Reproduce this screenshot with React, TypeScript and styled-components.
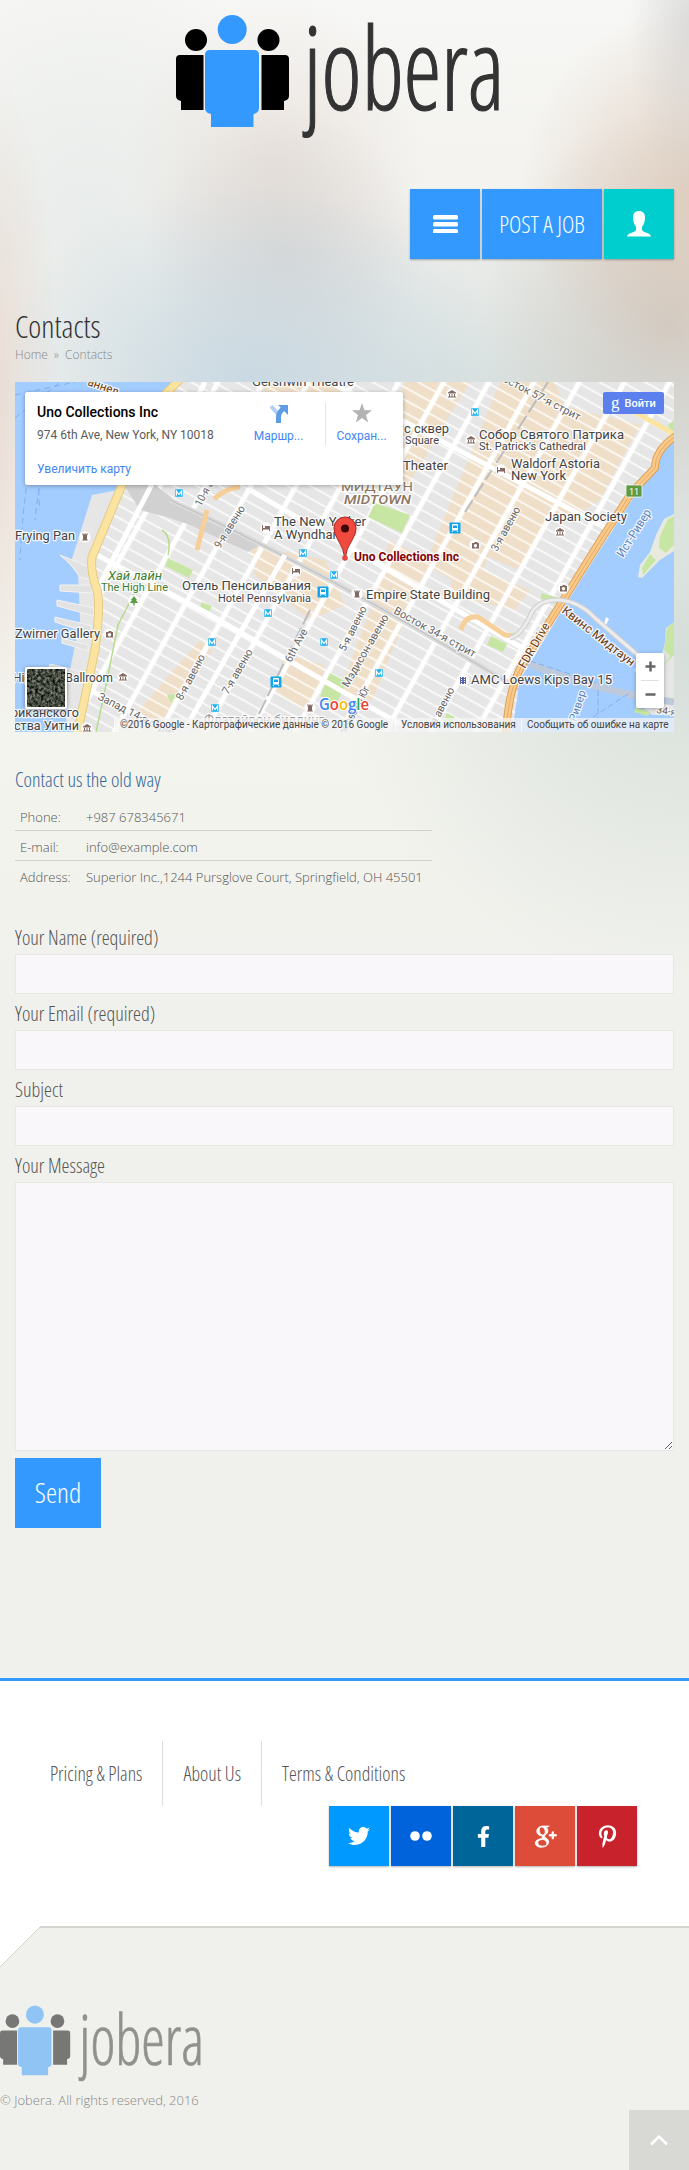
import {useState} from 'react';
import {FaFacebookF, FaPinterestP, FaTwitter} from 'react-icons/fa';
import {TiSocialGooglePlus} from 'react-icons/ti';
import styled, {createGlobalStyle} from 'styled-components';

const GlobalStyle = createGlobalStyle`
  * {
    box-sizing: border-box;
  }

  body {
    margin: 0;
    background: #f0f1ec;
    color: #555;
    font: 300 13px/20px 'Open Sans', sans-serif;
  }

  a {
    color: inherit;
    text-decoration: none;
  }
`;

const Page = styled.div`
  min-height: 2170px;
  background:
    radial-gradient(ellipse 60px 180px at 689px 20px, rgba(205, 205, 205, 0.6), transparent),
    radial-gradient(ellipse 260px 200px at 250px 385px, rgba(198, 215, 226, 0.9), transparent),
    radial-gradient(ellipse 140px 150px at 285px 255px, rgba(212, 210, 208, 0.75), transparent),
    radial-gradient(ellipse 150px 170px at 275px 165px, rgba(228, 217, 211, 0.6), transparent),
    radial-gradient(ellipse 190px 190px at 710px 190px, rgba(220, 198, 180, 0.8), transparent),
    radial-gradient(ellipse 190px 210px at 670px 320px, rgba(205, 198, 190, 0.85), transparent),
    radial-gradient(ellipse 70px 330px at -10px 400px, rgba(232, 214, 204, 0.8), transparent),
    radial-gradient(ellipse 420px 210px at 480px 400px, rgba(208, 219, 219, 0.8), transparent),
    radial-gradient(ellipse 360px 330px at 689px 650px, rgba(204, 215, 210, 0.75), transparent),
    radial-gradient(ellipse 200px 300px at 90px 230px, rgba(228, 234, 233, 0.7), transparent),
    linear-gradient(#f7f7f5, #f2f1ed 250px, #f4f4ee 740px, #f0f1ec 1000px);
`;

const Header = styled.header`
  padding: 0 15px;
`;

const HeaderLogo = styled.a`
  display: flex;
  justify-content: center;
  padding: 14px 8px 0 0;
`;

const Toolbar = styled.nav`
  display: flex;
  justify-content: flex-end;
  gap: 2px;
  padding-top: 50px;
`;

const ToolButton = styled.button<{$accent?: boolean; $wide?: boolean}>`
  display: flex;
  align-items: center;
  justify-content: center;
  width: ${props => (props.$wide ? 120 : 70)}px;
  height: 70px;
  padding: 0;
  border: 0;
  background: ${props => (props.$accent ? '#00cdcd' : '#3399ff')};
  box-shadow: 0 1px 2px rgba(0, 0, 0, 0.3);
  color: white;
  font: 300 23.500px 'Open Sans', sans-serif;
  font-stretch: 75%;
`;

const Main = styled.main`
  padding: 47px 15px 0;
`;

const Title = styled.h1`
  margin: 0;
  color: #333;
  font-size: 31px;
  font-weight: 300;
  font-stretch: 75%;
  line-height: 40px;
`;

const Breadcrumbs = styled.div`
  display: flex;
  gap: 6px;
  height: 36px;
  color: #888;
  font-size: 12px;
  line-height: 17px;
`;

const MapFrame = styled.section`
  position: relative;
  height: 350px;
  overflow: hidden;
  font-family: Roboto, sans-serif;
  font-weight: 400;
`;

const PlaceCard = styled.div`
  position: absolute;
  top: 10px;
  left: 10px;
  display: flex;
  width: 378px;
  height: 93px;
  padding: 11px 0 0 12px;
  border-radius: 2px;
  background: white;
  box-shadow: 0 1px 4px rgba(0, 0, 0, 0.3);
  color: #5b5b5b;
  font-size: 12px;
`;

const PlaceInfo = styled.div`
  width: 195px;
`;

const PlaceName = styled.div`
  color: black;
  font-size: 14px;
  font-weight: 500;
  line-height: 18px;
`;

const PlaceAddress = styled.div`
  margin-top: 6px;
  line-height: 16px;
`;

const MapLink = styled.a`
  display: block;
  margin-top: 18px;
  color: #4285f4;
  line-height: 16px;
`;

const PlaceAction = styled.a<{$divided?: boolean}>`
  display: flex;
  flex-direction: column;
  align-items: center;
  gap: 5px;
  width: ${props => (props.$divided ? 72 : 93)}px;
  height: 42px;
  border-left: ${props => (props.$divided ? '1px solid #e5e5e5' : '0')};
  color: #4285f4;
  line-height: 16px;
`;

const SignIn = styled.button`
  position: absolute;
  top: 10px;
  right: 10px;
  display: flex;
  align-items: center;
  gap: 5px;
  width: 61px;
  height: 22px;
  padding: 0 0 0 8px;
  border: 0;
  border-radius: 2px;
  background: #5b80ee;
  color: white;
  font: 500 11px Roboto, sans-serif;
`;

const SignInMark = styled.span`
  font: 400 17px/14px 'Liberation Serif', serif;
`;

const ZoomControl = styled.div`
  position: absolute;
  right: 10px;
  bottom: 24px;
  width: 28px;
  height: 55px;
  border-radius: 2px;
  background: white;
  box-shadow: 0 1px 4px rgba(0, 0, 0, 0.3);
`;

const Satellite = styled.div`
  position: absolute;
  bottom: 23px;
  left: 10px;
  width: 42px;
  height: 42px;
  border: 2px solid white;
  border-radius: 2px;
  box-shadow: 0 1px 4px rgba(0, 0, 0, 0.4);
`;

const MapFooter = styled.div`
  position: absolute;
  right: 0;
  bottom: 0;
  display: flex;
  width: 560px;
  height: 14px;
  background: rgba(245, 245, 245, 0.75);
  color: #444;
  font-size: 10px;
  line-height: 14px;
`;

const MapFooterItem = styled.span<{$width: number}>`
  width: ${props => props.$width}px;
  padding-left: 5px;
  border-left: 1px solid rgba(255, 255, 255, 0.7);
  white-space: nowrap;
`;

const SectionTitle = styled.h2`
  margin: 36px 0 0;
  color: #336699;
  font-size: 20px;
  font-weight: 300;
  font-stretch: 75%;
  line-height: 24px;
`;

const ContactList = styled.dl`
  width: 417px;
  margin: 9px 0 0;
`;

const ContactRow = styled.div`
  display: flex;
  height: 30px;
  padding: 6px 5px 0;
  border-bottom: 1px solid #d0d1cd;

  &:last-child {
    border-bottom: 0;
  }
`;

const ContactTerm = styled.dt`
  width: 66px;
`;

const ContactValue = styled.dd`
  margin: 0;
  white-space: nowrap;
`;

const Form = styled.form`
  padding-top: 27px;
`;

const Label = styled.label`
  display: block;
  height: 36px;
  padding-top: 2px;
  font-size: 20px;
  font-stretch: 75%;
  line-height: 36px;
`;

const Input = styled.input`
  display: block;
  width: 100%;
  height: 40px;
  border: 1px solid #e7e8e3;
  background: #f9f7f9;
`;

const Textarea = styled.textarea`
  display: block;
  width: 100%;
  height: 269px;
  border: 1px solid #e7e8e3;
  background: #f9f7f9;
  resize: vertical;
`;

const SendButton = styled.button`
  display: block;
  width: 86px;
  height: 70px;
  margin-top: 7px;
  padding: 0 0 2px;
  border: 0;
  background: #3399ff;
  color: white;
  font: 300 28px 'Open Sans', sans-serif;
  font-stretch: 75%;
`;

const Footer = styled.footer`
  margin-top: 150px;
`;

const FooterTop = styled.div`
  height: 248px;
  padding: 60px 52px 0 30px;
  border-top: 3px solid #3399ff;
  background: white;
`;

const FooterNav = styled.nav`
  display: flex;
  height: 65px;
`;

const FooterLink = styled.a`
  padding: 0 20px;
  font-size: 19.700px;
  font-stretch: 75%;
  line-height: 65px;

  & + & {
    border-left: 1px solid #ddd;
  }
`;

const SocialList = styled.div`
  display: flex;
  justify-content: flex-end;
  gap: 2px;
`;

const SocialLink = styled.a<{$color: string}>`
  display: flex;
  align-items: center;
  justify-content: center;
  width: 60px;
  height: 60px;
  background: ${props => props.$color};
  box-shadow: 0 1px 2px rgba(0, 0, 0, 0.3);
  color: white;
`;

const FooterBottom = styled.div`
  position: relative;
  height: 244px;
`;

const FooterEdge = styled.svg`
  display: block;
`;

const FooterLogo = styled.div`
  margin-top: 37px;
  opacity: 0.5;

  svg {
    display: block;
  }
`;

const Copyright = styled.div`
  margin-top: 7px;
  color: #888;
`;

const ToTop = styled.a`
  position: absolute;
  right: 0;
  bottom: 0;
  display: flex;
  align-items: center;
  justify-content: center;
  width: 60px;
  height: 60px;
  background: #d8d9d5;
`;

const Logo = ({width}: {width: number}) => (
  <svg width={width} height={(width * 125) / 330} viewBox="0 0 330 125">
    <g fill="black">
      <circle cx="20" cy="26" r="11" />
      <circle cx="92.500" cy="26" r="11" />
      <path d="M4 41H27.500V96H5V87Q0 86 0 82V45Q0 41 4 41Z" />
      <path d="M109 41H85.500V96H108V87Q113 86 113 82V45Q113 41 109 41Z" />
    </g>
    <g fill="#3399ff">
      <circle cx="56.200" cy="15.500" r="14.500" />
      <path d="M34 36H78Q83 36 83 41V94Q83 99 77.500 100V113H35V100Q29 99 29 94V41Q29 36 34 36Z" />
    </g>
    <text
      x="127.500"
      y="96"
      fill="#333"
      stroke="#333"
      strokeWidth="1.200"
      fontFamily="Open Sans"
      fontSize="114"
      fontWeight="300"
      textLength="201"
      lengthAdjust="spacingAndGlyphs"
      style={{fontStretch: '75%'}}
    >
      jobera
    </text>
  </svg>
);

type MapLabelData = {
  text: string;
  x: number;
  y: number;
  width: number;
  size?: number;
  angle?: number;
  color?: string;
  weight?: number;
  italic?: boolean;
};

const labels: MapLabelData[] = [
  {text: 'аннел', x: 87, y: 385, width: 32, angle: 20, color: '#6b3a10', size: 12},
  {text: 'Gershwin Theatre', x: 252, y: 386, width: 102},
  {text: '10-я авеню', x: 201, y: 507, width: 52, size: 11, angle: -62, color: '#666'},
  {text: '9-я авеню', x: 220, y: 549, width: 48, size: 11, angle: -58, color: '#666'},
  {text: 'Frying Pan', x: 15, y: 540, width: 60},
  {text: 'The New Yorker', x: 274, y: 526, width: 92},
  {text: 'A Wyndham', x: 274, y: 539, width: 70},
  {text: 'МИДТАУН', x: 341, y: 491, width: 72, color: '#8c7762', size: 12},
  {text: 'MIDTOWN', x: 344, y: 504, width: 67, color: '#8c7762', size: 12, italic: true, weight: 500},
  {text: 'с сквер', x: 404, y: 433, width: 45},
  {text: 'Square', x: 405, y: 444, width: 34, size: 11},
  {text: 'Theater', x: 403, y: 470, width: 45},
  {text: 'Собор Святого Патрика', x: 479, y: 439, width: 145},
  {text: "St. Patrick's Cathedral", x: 479, y: 450, width: 107, size: 11},
  {text: 'Waldorf Astoria', x: 511, y: 468, width: 89},
  {text: 'New York', x: 511, y: 480, width: 55},
  {text: 'Japan Society', x: 545, y: 521, width: 82},
  {text: 'осток 57-я стрит', x: 502, y: 381, width: 86, size: 11, angle: 27.5, color: '#666'},
  {text: '3-я авеню', x: 497, y: 552, width: 49, size: 11, angle: -61, color: '#666'},
  {text: 'Ист-Ривер', x: 623, y: 558, width: 54, size: 12, angle: -58, color: '#5b84bd'},
  {text: 'Uno Collections Inc', x: 354, y: 561, width: 105, size: 12, color: '#850000', weight: 700},
  {text: 'Хай лайн', x: 108, y: 580, width: 54, color: '#3d8030', italic: true},
  {text: 'The High Line', x: 101, y: 591, width: 67, size: 11, color: '#3d8030'},
  {text: 'Отель Пенсильвания', x: 182, y: 590, width: 129},
  {text: 'Hotel Pennsylvania', x: 218, y: 602, width: 93, size: 11},
  {text: 'Zwirner Gallery', x: 15, y: 638, width: 85},
  {text: 'High Line Ballroom', x: 13, y: 682, width: 100},
  {text: 'риканского', x: 11, y: 717, width: 68},
  {text: 'ства Уитни', x: 14, y: 730, width: 65},
  {text: 'Запад 14-я стрит', x: 97, y: 699, width: 86, size: 11, angle: 27, color: '#666'},
  {text: '8-я авеню', x: 182, y: 701, width: 50, size: 11, angle: -62, color: '#666'},
  {text: '7-я авеню', x: 228, y: 695, width: 50, size: 11, angle: -60, color: '#666'},
  {text: '6th Ave', x: 291, y: 663, width: 36, size: 11, angle: -62, color: '#666'},
  {text: '5-я авеню', x: 345, y: 652, width: 49, size: 11, angle: -63, color: '#666'},
  {text: 'Мэдисон-авеню', x: 348, y: 688, width: 82, size: 11, angle: -60, color: '#666'},
  {text: 'Парк-авеню Юг', x: 340, y: 745, width: 64, size: 11, angle: -62, color: '#666'},
  {text: 'я авеню', x: 436, y: 725, width: 40, size: 11, angle: -62, color: '#666'},
  {text: 'Empire State Building', x: 366, y: 599, width: 124},
  {text: 'Восток 34-я стрит', x: 393, y: 613, width: 92, size: 11, angle: 29, color: '#666'},
  {text: 'AMC Loews Kips Bay 15', x: 471, y: 684, width: 141},
  {text: 'FDR Drive', x: 525, y: 669, width: 50, size: 12, angle: -60, color: '#6b3a10'},
  {text: 'Квинс Мидтаун Т', x: 561, y: 612, width: 99, size: 12, angle: 38, color: '#6b3a10'},
  {text: 'Ривер', x: 576, y: 722, width: 32, size: 11, angle: -72, color: '#5b84bd'},
  {text: '34-я', x: 656, y: 713, width: 20, size: 10, angle: 8, color: '#666'},
  {text: 'Флэтайрон-билдинг', x: 204, y: 724, width: 120, color: '#999'},
];

const metroStops = [
  [179, 493], [303, 553], [475, 412], [334, 575], [268, 613],
  [212, 642], [324, 642], [215, 708], [379, 673],
];

const trainStations = [[455, 528], [323, 592], [276, 682]];

const hotels = [[266, 528], [501, 470], [296, 571]];
const towers = [[85, 537], [310, 708], [357, 594]];
const museums = [[452, 394], [471, 440], [560, 532], [123, 677], [87, 728]];
const sights = [[475, 545], [563, 588], [109, 634]];

const MapLabel = ({text, x, y, width, size = 13, angle = 0, color = '#444', weight = 400, italic}: MapLabelData) => (
  <text
    x={x}
    y={y}
    fill={color}
    stroke="white"
    strokeOpacity=".85"
    strokeWidth="2.500"
    strokeLinejoin="round"
    paintOrder="stroke"
    fontSize={size}
    fontWeight={weight}
    fontStyle={italic ? 'italic' : 'normal'}
    textLength={width}
    lengthAdjust="spacingAndGlyphs"
    transform={`rotate(${angle} ${x} ${y})`}
  >
    {text}
  </text>
);

const CityMap = () => (
  <svg width="659" height="350" viewBox="15 382 659 350">
    <defs>
      <pattern id="blocks" width="39.500" height="11" patternUnits="userSpaceOnUse" patternTransform="translate(190 677) rotate(29)">
        <rect width="39.500" height="11" fill="#e6e6e6" />
        <path d="M0 5.500H39.500" stroke="white" strokeWidth="1.500" />
        <path d="M0 0V11M39.500 0V11" stroke="white" strokeWidth="5" />
      </pattern>
      <pattern id="shops" width="39.500" height="11" patternUnits="userSpaceOnUse" patternTransform="translate(190 677) rotate(29)">
        <rect width="39.500" height="11" fill="#f0dfc8" />
        <path d="M0 5.500H39.500" stroke="white" strokeWidth="1.500" />
        <path d="M0 0V11M39.500 0V11" stroke="white" strokeWidth="5" />
      </pattern>
    </defs>
    <rect x="15" y="382" width="659" height="350" fill="url(#blocks)" />

    {/* commercial strips along the avenues */}
    <g fill="url(#shops)">
      <path d="M405 382L470 382L405 490L365 470Z" />
      <path d="M500 382L555 382L570 420L470 590L425 565Z" />
      <path d="M560 405L640 425L600 500L560 525L500 500Z" />
      <path d="M500 480L560 500L520 570L460 545Z" />
      <path d="M250 545L325 560L345 605L310 620L255 575Z" />
      <path d="M390 540L430 560L405 620L372 700L340 690L370 610Z" />
      <path d="M200 640L212 650L165 725L145 732L130 720Z" />
      <path d="M285 655L325 665L310 715L275 690Z" />
      <path d="M455 560L530 590L515 610L450 595Z" />
      <path d="M260 382L345 382L335 400L270 400Z" />
    </g>

    {/* Hudson */}
    <path d="M15 382H178L150 405L122 485L91 560L95 600L92 650L76 732H15Z" fill="#a3ccff" />
    <g fill="none" stroke="#83aff0" strokeDasharray="6 4">
      <path d="M15 395L75 382M15 418L60 382M50 400Q35 470 40 510M45 400Q25 460 20 560M55 420Q40 470 35 520" />
    </g>
    <path d="M92 495L118 490L95 560L98 610L92 650L88 690L76 732L66 725L68 680L80 620L78 570L70 565Z" fill="#e6e6e6" />
    <g fill="#e2e2e2" stroke="#f3f3f3">
      <path d="M60 555L92 568V580L80 577L70 564Z" />
      <path d="M57 600L94 608V616L57 606ZM55 617L92 626V634L55 622ZM50 664L90 674V682L48 671ZM60 585H92V593L60 591ZM62 638L88 645V651L62 643Z" />
    </g>

    {/* rail yards */}
    <path d="M124 485H155L175 500L205 520L260 545L248 552L190 525L170 518L140 510Z" fill="#d1d1d1" />
    <path d="M170 500Q235 530 320 575T520 690" fill="none" stroke="#dadada" strokeWidth="5" />
    <path d="M170 500Q235 530 320 575T520 690" fill="none" stroke="#bcbcbc" />
    <path d="M548 382L465 512M310 610L255 722" stroke="#bdbdbd" strokeWidth="2" strokeDasharray="16 4" />

    {/* parks */}
    <g fill="#c8e6a3">
      <path d="M375 503L410 515L402 533L368 517Z" />
      <path d="M168 558L193 570L189 578L165 566Z" />
      <path d="M201 602L212 606L208 613L200 608Z" />
      <path d="M330 673L347 682L336 704L320 696Z" />
      <path d="M491 636L507 644L503 652L487 645Z" />
      <path d="M541 593L560 598L556 604L541 599Z" />
      <path d="M167 695L177 694L171 703Z" />
      <path d="M668 425L674 420V440Z" />
      <path d="M447 713L455 717L450 728L443 724Z" />
    </g>
    <path d="M168 555Q172 536 162 530M140 582L118 625L105 690L96 732" fill="none" stroke="#b5dd8d" strokeWidth="1.500" />

    {/* main crossings */}
    <g fill="none" stroke="white" strokeWidth="5">
      <path d="M97 555L205 612M205 612L340 690L400 724M330 382L670 562M250 490L560 670M90 690L170 732" />
      <path d="M205 382L97 590M285 555L190 720" />
    </g>

    {/* East River */}
    <path d="M674 437L645 480L600 550L566 604L520 680L512 732H674Z" fill="#a3ccff" />
    <path d="M674 514L664 519L656 535L650 552L640 565L638 577L642 578L660 560L674 551Z" fill="#e8eadf" />
    <path d="M674 516L668 519L660 536L659 548L666 553L674 545ZM650 554L642 568L643 575L656 560Z" fill="#c8e6a3" />
    <path d="M674 622L666 628L665 642L662 655L664 665L640 705L652 715L674 715Z" fill="#e6e6e6" />
    <path d="M674 622L667 628L664 650L670 656L664 665L674 655ZM636 707L650 712L648 716L634 712Z" fill="#c8e6a3" />
    <path d="M606 617L609 619L606 625L604 624Z" fill="white" />
    <path d="M520 660Q590 690 674 702" fill="none" stroke="#bdcadb" strokeWidth="7" />
    <path d="M530 661L600 684M598 690V732M628 694L570 732" stroke="#83aff0" strokeDasharray="6 3" fill="none" />

    {/* highways */}
    <g fill="none" strokeLinejoin="round">
      <path d="M184 375L155 405L122 485L92 557Q90 570 97 590Q101 605 95 650L77 735" stroke="#e5cc86" strokeWidth="9" />
      <path d="M184 375L155 405L122 485L92 557Q90 570 97 590Q101 605 95 650L77 735" stroke="#fbe3a0" strokeWidth="7" />
      <path d="M88 382L130 400M635 412L674 434" stroke="#fbe3a0" strokeWidth="5" />
      <path d="M676 436Q655 450 655 468L632 492L602 538L562 602L522 665Q508 690 506 735" stroke="#d9a15f" strokeWidth="8" />
      <path d="M676 436Q655 450 655 468L632 492L602 538L562 602L522 665Q508 690 506 735" stroke="#fbc985" strokeWidth="6" />
      <path d="M676 436Q655 450 655 468L632 492L602 538L562 602L522 665Q508 690 506 735" stroke="#e0ad70" />
      <path d="M214 499Q226 488 240 487M207 510L197 550M461 630Q465 615 478 617L505 635L514 636" stroke="#f7cf98" strokeWidth="5" />
      <path d="M510 638Q522 635 532 612Q540 599 560 600Q580 602 595 618L655 670" stroke="#cfcfcf" strokeWidth="5" />
      <path d="M510 638Q522 635 532 612Q540 599 560 600Q580 602 595 618L655 670" stroke="#ececec" strokeWidth="3" />
    </g>

    {labels.map(label => (
      <MapLabel key={`${label.text}${label.x}`} {...label} />
    ))}

    {metroStops.map(([x, y]) => (
      <g key={`${x}-${y}`} transform={`translate(${x} ${y})`}>
        <rect x="-4" y="-4" width="8" height="8" fill="#1eb0f0" stroke="#d8effb" strokeWidth=".5" />
        <path d="M-2.500 2.500V-2L0 1.500L2.500-2V2.500" fill="none" stroke="white" strokeWidth="1.200" />
      </g>
    ))}
    {trainStations.map(([x, y]) => (
      <g key={`${x}-${y}`} transform={`translate(${x} ${y})`}>
        <rect x="-5.500" y="-5.500" width="11" height="11" rx="1" fill="#12a5ee" />
        <rect x="-3" y="-4" width="6" height="6.500" rx="1" fill="white" />
        <path d="M-2-2.500H2V0H-2Z" fill="#12a5ee" />
        <path d="M-2 2.500L-3 4M2 2.500L3 4" stroke="white" />
      </g>
    ))}

    {[...hotels, ...towers, ...museums, ...sights].map(([x, y]) => (
      <circle key={`${x}-${y}`} cx={x} cy={y} r="6" fill="white" stroke="#ddd" strokeWidth=".5" />
    ))}
    <g fill="#846a61">
      {hotels.map(([x, y]) => (
        <path key={x} transform={`translate(${x} ${y})`} d="M-4-3H-3V0H-1V-2H4V3H3V1.500H-3V3H-4Z" />
      ))}
      {towers.map(([x, y]) => (
        <path key={x} transform={`translate(${x} ${y})`} d="M-3-3.500H-1.500V-2.500H-.7V-3.500H.7V-2.500H1.500V-3.500H3L2-1V2L3 3.500H-3L-2 2V-1Z" />
      ))}
      {museums.map(([x, y]) => (
        <path key={x} transform={`translate(${x} ${y})`} d="M-4-1.500L0-4L4-1.500V-.5H-4ZM-3 0H-2V2.500H-3ZM-.5 0H.5V2.500H-.5ZM2 0H3V2.500H2ZM-4 2.500H4V3.500H-4Z" />
      ))}
      {sights.map(([x, y]) => (
        <path key={x} transform={`translate(${x} ${y})`} fillRule="evenodd" d="M-3-2H-1L0-3H2L3-2H4V3.500H-3ZM.5-1A1.700 1.700 0 1 0 .51-1Z" />
      ))}
    </g>
    <circle cx="134" cy="601" r="6" fill="white" />
    <path d="M134 596L137 600H136L138 603H134.700V605.500H133.300V603H130L132 600H131Z" fill="#5a9b45" />
    <circle cx="463" cy="680" r="6" fill="white" />
    <path d="M460 677H466V684H460Z" fill="#5763a8" />
    <path d="M461.500 677V684M464.500 677V684" stroke="white" strokeDasharray="1 1" />
    <rect x="626" y="485" width="16" height="12" fill="#5f9a3f" stroke="white" strokeWidth=".7" />
    <text x="634" y="494.500" fill="white" fontSize="9" textAnchor="middle">11</text>

    <path d="M345 559Q344 549 338 540Q334 534 334 528A11 11 0 0 1 356 528Q356 534 352 540Q346 549 345 559Z" fill="#f0493e" stroke="#a7291f" />
    <circle cx="345" cy="528.500" r="4" fill="#3d0806" />
    <circle cx="345" cy="558" r="2.500" fill="#f0493e" stroke="#a7291f" strokeWidth=".5" />

    <text x="319" y="710" fontFamily="Open Sans" fontSize="17" fontWeight="600" textLength="50" lengthAdjust="spacingAndGlyphs" stroke="white" strokeWidth="2" paintOrder="stroke">
      <tspan fill="#4285f4">G</tspan>
      <tspan fill="#ea4335">o</tspan>
      <tspan fill="#fbbc05">o</tspan>
      <tspan fill="#4285f4">g</tspan>
      <tspan fill="#34a853">l</tspan>
      <tspan fill="#ea4335">e</tspan>
    </text>
  </svg>
);

const MapWidget = () => (
  <MapFrame>
    <CityMap />
    <PlaceCard>
      <PlaceInfo>
        <PlaceName>Uno Collections Inc</PlaceName>
        <PlaceAddress>974 6th Ave, New York, NY 10018</PlaceAddress>
        <MapLink href="#">Увеличить карту</MapLink>
      </PlaceInfo>
      <PlaceAction href="#">
        <svg width="18" height="20" viewBox="0 0 18 20">
          <path d="M1 3L8 11" stroke="#b3d0f6" strokeWidth="4" />
          <path d="M8.500 20V14Q8.500 9 14 5" fill="none" stroke="#5f9ce6" strokeWidth="5" />
          <path d="M8 2H18V12Z" fill="#5f9ce6" />
        </svg>
        Маршр...
      </PlaceAction>
      <PlaceAction href="#" $divided>
        <svg width="20" height="20" viewBox="0 0 20 20">
          <path d="M10 0L12.500 7.300H20L14 12L16.200 19.500L10 15L3.800 19.500L6 12L0 7.300H7.500Z" fill="#b3b3b3" />
        </svg>
        Сохран...
      </PlaceAction>
    </PlaceCard>
    <SignIn>
      <SignInMark>g</SignInMark>
      Войти
    </SignIn>
    <Satellite>
      <svg width="38" height="38">
        <filter id="terrain" colorInterpolationFilters="sRGB">
          <feTurbulence type="fractalNoise" baseFrequency=".35" numOctaves="3" seed="4" />
          <feColorMatrix values=".9 0 0 0 -.18  .9 0 0 0 -.16  .8 0 0 0 -.15  0 0 0 0 1" />
        </filter>
        <rect width="38" height="38" filter="url(#terrain)" />
      </svg>
    </Satellite>
    <ZoomControl>
      <svg width="28" height="55">
        <path d="M9.500 13.500H19.500M14.500 8.500V18.500M9.500 41.500H19.500" stroke="#666" strokeWidth="2.500" />
        <path d="M5 27.500H23" stroke="#e0e0e0" />
      </svg>
    </ZoomControl>
    <MapFooter>
      <MapFooterItem $width={281}>©2016 Google - Картографические данные © 2016 Google</MapFooterItem>
      <MapFooterItem $width={126}>Условия использования</MapFooterItem>
      <MapFooterItem $width={153}>Сообщить об ошибке на карте</MapFooterItem>
    </MapFooter>
  </MapFrame>
);

const contacts = [
  ['Phone:', '+987 678345671'],
  ['E-mail:', 'info@example.com'],
  ['Address:', 'Superior Inc.,1244 Pursglove Court, Springfield, OH 45501'],
];

const fields = [
  {id: 'name', label: 'Your Name (required)'},
  {id: 'email', label: 'Your Email (required)'},
  {id: 'subject', label: 'Subject'},
];

const ContactForm = () => {
  const [values, setValues] = useState<Record<string, string>>({});
  const update = (id: string, value: string) => setValues({...values, [id]: value});

  return (
    <Form onSubmit={event => event.preventDefault()}>
      {fields.map(({id, label}) => (
        <div key={id}>
          <Label htmlFor={id}>{label}</Label>
          <Input id={id} value={values[id] ?? ''} onChange={event => update(id, event.target.value)} />
        </div>
      ))}
      <Label htmlFor="message">Your Message</Label>
      <Textarea id="message" value={values.message ?? ''} onChange={event => update('message', event.target.value)} />
      <SendButton>Send</SendButton>
    </Form>
  );
};

const App = () => (
  <Page>
    <GlobalStyle />
    <Header>
      <HeaderLogo href="#">
        <Logo width={330} />
      </HeaderLogo>
      <Toolbar>
        <ToolButton aria-label="Menu">
          <svg width="25" height="18" fill="white">
            <rect width="25" height="4.500" rx="1.500" />
            <rect y="7" width="25" height="4.500" rx="1.500" />
            <rect y="14" width="25" height="4.500" rx="1.500" />
          </svg>
        </ToolButton>
        <ToolButton $wide>POST A JOB</ToolButton>
        <ToolButton $accent aria-label="Account">
          <svg width="24" height="26" viewBox="0 0 24 26" fill="white">
            <path d="M12 0C16 0 18 2.500 18 6.500Q18 12 15 16V19Q16 21 20 22Q23.500 23 24 25.500H0Q.5 23 4 22Q8 21 9 19V16Q6 12 6 6.500C6 2.500 8 0 12 0Z" />
          </svg>
        </ToolButton>
      </Toolbar>
    </Header>
    <Main>
      <Title>Contacts</Title>
      <Breadcrumbs>
        <a href="#">Home</a>
        <span>»</span>
        <span>Contacts</span>
      </Breadcrumbs>
      <MapWidget />
      <SectionTitle>Contact us the old way</SectionTitle>
      <ContactList>
        {contacts.map(([term, value]) => (
          <ContactRow key={term}>
            <ContactTerm>{term}</ContactTerm>
            <ContactValue>{value}</ContactValue>
          </ContactRow>
        ))}
      </ContactList>
      <ContactForm />
    </Main>
    <Footer>
      <FooterTop>
        <FooterNav>
          <FooterLink href="#">Pricing &amp; Plans</FooterLink>
          <FooterLink href="#">About Us</FooterLink>
          <FooterLink href="#">Terms &amp; Conditions</FooterLink>
        </FooterNav>
        <SocialList>
          <SocialLink href="#" $color="#0099ff"><FaTwitter size={22} /></SocialLink>
          <SocialLink href="#" $color="#0063dc">
            <svg width="22" height="10" fill="white">
              <circle cx="5" cy="5" r="4.800" />
              <circle cx="17" cy="5" r="4.800" />
            </svg>
          </SocialLink>
          <SocialLink href="#" $color="#006699"><FaFacebookF size={21} /></SocialLink>
          <SocialLink href="#" $color="#dd4b39"><TiSocialGooglePlus size={34} stroke="white" strokeWidth={0.6} /></SocialLink>
          <SocialLink href="#" $color="#c8232c"><FaPinterestP size={23} /></SocialLink>
        </SocialList>
      </FooterTop>
      <FooterBottom>
        <FooterEdge width="689" height="42">
          <path d="M0 0H689V1H40L0 41Z" fill="white" />
          <path d="M40 1H689" stroke="#d4d5d0" strokeWidth="2" />
          <path d="M40 1L0 41" stroke="#d4d5d0" />
        </FooterEdge>
        <FooterLogo>
          <Logo width={205} />
        </FooterLogo>
        <Copyright>© Jobera. All rights reserved, 2016</Copyright>
        <ToTop href="#" aria-label="Back to top">
          <svg width="18" height="12" fill="none" stroke="white" strokeWidth="2.500">
            <path d="M1 10.500L9 2.500L17 10.500" />
          </svg>
        </ToTop>
      </FooterBottom>
    </Footer>
  </Page>
);

export default App;
